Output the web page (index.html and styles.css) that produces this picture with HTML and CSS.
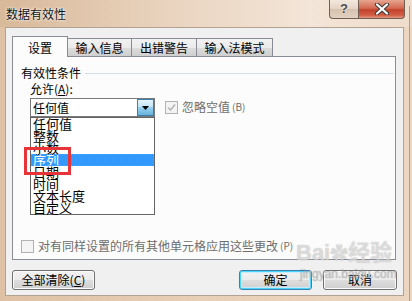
FILE: index.html
```html
<!DOCTYPE html>
<html lang="zh">
<head>
<meta charset="utf-8">
<link rel="stylesheet" href="styles.css">
</head>
<body>
<div class="window">
  <div class="titlebar">
    <span class="title">数据有效性</span>
    <div class="caption-btns">
      <div class="cbtn help">?</div>
      <div class="cbtn close">
        <svg width="16" height="12" viewBox="0 0 16 12"><path d="M3 1.5 L13 10.5 M13 1.5 L3 10.5" stroke="#3a3a3a" stroke-width="4.2" stroke-linecap="round"/><path d="M3 1.5 L13 10.5 M13 1.5 L3 10.5" stroke="#ffffff" stroke-width="2.2" stroke-linecap="round"/></svg>
      </div>
    </div>
  </div>
  <div class="client">
    <div class="tabs">
      <div class="tab active">设置</div>
      <div class="tab t2">输入信息</div>
      <div class="tab t3">出错警告</div>
      <div class="tab t4">输入法模式</div>
    </div>
    <div class="panel">
      <div class="group-title"><span>有效性条件</span><i class="rule"></i></div>
      <div class="label">允许(<u>A</u>):</div>
      <div class="row">
        <div class="combo">
          <span class="combo-text">任何值</span>
          <div class="drop"><svg width="7" height="4" viewBox="0 0 7 4"><path d="M0 0 H7 L3.5 4 Z" fill="#000"/></svg></div>
          <ul class="list">
            <li>任何值</li>
            <li>整数</li>
            <li>小数</li>
            <li class="sel">序列</li>
            <li>日期</li>
            <li>时间</li>
            <li>文本长度</li>
            <li>自定义</li>
          </ul>
        </div>
        <div class="chk disabled">
          <span class="box checked"><svg width="9" height="9" viewBox="0 0 9 9"><path d="M1 4.5 L3.5 7 L8 1.5" stroke="#b5b5b5" stroke-width="1.6" fill="none"/></svg></span>
          <span>忽略空值</span><span class="acc">(B)</span>
        </div>
      </div>
      <div class="chk bottom disabled">
        <span class="box"></span>
        <span>对有同样设置的所有其他单元格应用这些更改</span><span class="acc">(P)</span>
      </div>
      <div class="redmark"></div>
    </div>
    <div class="buttons">
      <div class="btn clear">全部清除(<u>C</u>)</div>
      <div class="spacer"></div>
      <div class="btn ok">确定</div>
      <div class="btn cancel">取消</div>
    </div>
  </div>
  <div class="watermark">
    <div class="wm1">Bai<span class="paw">✿</span>经验</div>
    <div class="wm2">jingyan.baidu.com</div>
  </div>
</div>
</body>
</html>
```

FILE: styles.css
```css
* { box-sizing: border-box; }
html, body {
  margin: 0;
  padding: 0;
  width: 412px;
  height: 301px;
  overflow: hidden;
  font-family: "Noto Sans CJK SC", "Liberation Sans", sans-serif;
  font-size: 12px;
  color: #000;
}
.window {
  position: relative;
  width: 412px;
  height: 301px;
  background: linear-gradient(to right, #dfc2a5 0%, #e8cfb7 50%, #ecd6c1 100%);
  padding: 0 8px 5px 5px;
  display: flex;
  flex-direction: column;
}
.window::after {
  content: "";
  position: absolute;
  right: 2px;
  top: 6px;
  bottom: 0;
  width: 1px;
  background: #b79c84;
}
.titlebar {
  height: 27px;
  margin-left: -5px;
  margin-right: -8px;
  padding-left: 6px;
  display: flex;
  align-items: flex-start;
  background: linear-gradient(to right, #d8b999 0%, #e9d3be 40%, #f3e5d8 75%, #efdccb 100%);
}
.title {
  margin-top: 6px;
  line-height: 16px;
  font-size: 12px;
  color: #111;
  text-shadow: 0 0 3px #fff, 0 0 2px #fff;
  flex: 1;
}
.caption-btns {
  display: flex;
  margin-right: 7px;
}
.cbtn {
  height: 19px;
  border: 1px solid #6f5f52;
  border-top: none;
}
.help {
  width: 29px;
  border-radius: 0 0 0 4px;
  border-right: none;
  background: linear-gradient(#f3e8de, #e4d3c4 50%, #d6c1ae 51%, #e2d1c2);
  color: #4a4a4a;
  font-family: "Liberation Sans", sans-serif;
  font-weight: bold;
  font-size: 13px;
  text-align: center;
  line-height: 17px;
  text-shadow: 0 0 2px #fff;
}
.close {
  width: 47px;
  border-radius: 0 0 4px 0;
  background: linear-gradient(#e6a58f, #d46a52 45%, #c2422c 55%, #d35f45 85%, #e79a82);
  display: flex;
  align-items: center;
  justify-content: center;
}
.client {
  flex: 1;
  background: #f0f0f0;
  border: 1px solid #b3a291;
  padding: 7px 6px 0 6px;
  display: flex;
  flex-direction: column;
}
.tabs {
  display: flex;
  align-items: flex-end;
  height: 21px;
  position: relative;
  z-index: 2;
}
.tab {
  height: 18px;
  border: 1px solid #898c95;
  border-bottom: none;
  border-left: none;
  background: linear-gradient(#f2f2f2, #ebebeb 50%, #dddddd 51%, #cfcfcf);
  text-align: center;
  line-height: 17px;
  margin-bottom: 0;
}
.tab.active {
  height: 21px;
  width: 56px;
  border-left: 1px solid #898c95;
  border-right: 1px solid #898c95;
  background: #fcfcfc;
  margin-bottom: -1px;
  line-height: 20px;
  padding-top: 1px;
}
.t2 { width: 64px; border-left: none; }
.t3 { width: 65px; }
.t4 { width: 76px; }
.panel {
  position: relative;
  height: 204px;
  width: 384px;
  border: 1px solid #898c95;
  background: #fcfcfc;
  padding: 9px 0 6px 8px;
  display: flex;
  flex-direction: column;
}
.group-title {
  display: flex;
  align-items: center;
  height: 14px;
  line-height: 14px;
  padding-right: 1px;
}
.group-title .rule {
  flex: 1;
  height: 1px;
  background: #d5dfe5;
  margin-left: 4px;
}
.label {
  margin-top: 2px;
  padding-left: 9px;
  height: 14px;
  line-height: 14px;
}
u { text-decoration: underline; text-underline-offset: 1px; }
.row {
  display: flex;
  align-items: flex-start;
  margin-top: 2px;
  padding-left: 9px;
}
.combo {
  position: relative;
  width: 125px;
  height: 19px;
  border: 1px solid #7a7a7a;
  background: #fff;
  display: flex;
  align-items: center;
}
.combo-text {
  flex: 1;
  padding-left: 2px;
  line-height: 17px;
}
.drop {
  width: 17px;
  height: 17px;
  border: 1px solid #3c7fb1;
  background: linear-gradient(#e5f4fc, #c4e5f6 45%, #98d1ef 50%, #68b3db);
  display: flex;
  align-items: center;
  justify-content: center;
}
.list {
  position: absolute;
  left: -1px;
  top: 18px;
  width: 125px;
  height: 98px;
  margin: 0;
  padding: 0;
  list-style: none;
  background: #fff;
  border: 1px solid #646464;
  z-index: 3;
}
.list li {
  height: 12px;
  line-height: 12px;
  font-size: 13px;
  padding-left: 2px;
  white-space: nowrap;
}
.list li.sel {
  background: #3399ff;
  color: #fff;
  outline: 1px dotted #c88a3a;
  outline-offset: -1px;
}
.chk {
  display: flex;
  align-items: center;
  height: 14px;
  line-height: 14px;
  color: #6d6d6d;
}
.row .chk {
  margin-left: 10px;
  margin-top: 2px;
}
.chk .box {
  width: 13px;
  height: 13px;
  border: 1px solid #b1b1b1;
  background: #f4f4f4;
  margin-right: 4px;
  display: flex;
  align-items: center;
  justify-content: center;
}
.chk .acc {
  font-size: 10px;
  margin-left: 2px;
}
.chk.bottom {
  margin-top: auto;
}
.redmark {
  position: absolute;
  left: 11px;
  top: 90px;
  width: 47px;
  height: 28px;
  border: 3px solid #e83438;
  z-index: 4;
}
.buttons {
  display: flex;
  margin-top: 10px;
  height: 20px;
  width: 385px;
}
.spacer { flex: 1; }
.btn {
  height: 20px;
  border: 1px solid #707070;
  border-radius: 3px;
  background: linear-gradient(#f2f2f2, #ebebeb 50%, #dddddd 51%, #cfcfcf);
  text-align: center;
  line-height: 18px;
  box-shadow: inset 0 0 0 1px #fbfbfb;
}
.clear { width: 83px; }
.ok {
  width: 73px;
  border-color: #3c7fb1;
  box-shadow: inset 0 0 0 1px #48d6fb, inset 0 0 0 2px #c5ecfb;
}
.cancel { width: 74px; margin-left: 11px; }
.watermark {
  position: absolute;
  left: 296px;
  top: 240px;
  z-index: 10;
  color: rgba(255, 255, 255, 0.55);
  text-shadow: 0 0 1px rgba(120, 120, 120, 0.6);
  pointer-events: none;
}
.wm1 {
  font-family: "Liberation Sans", "Noto Sans CJK SC", sans-serif;
  font-size: 22px;
  font-weight: bold;
  line-height: 26px;
}
.paw { font-size: 18px; }
.wm2 {
  font-family: "Liberation Sans", sans-serif;
  font-size: 12px;
  margin-left: 4px;
  line-height: 14px;
  color: rgba(200, 200, 200, 0.6);
}
```
